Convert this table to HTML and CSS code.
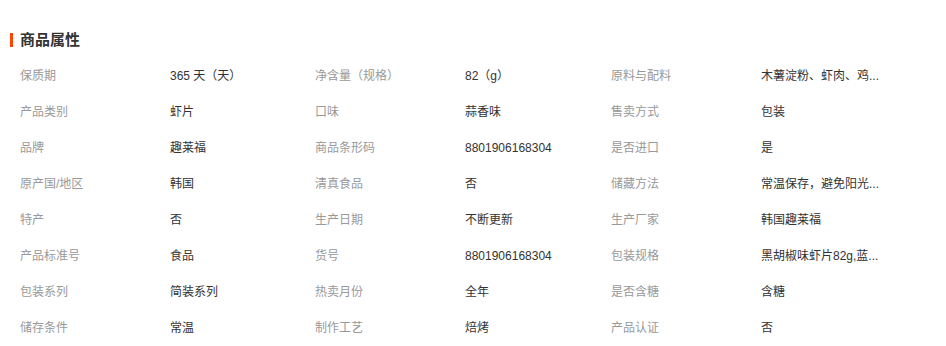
FILE: index.html
```html
<!DOCTYPE html>
<html lang="zh-CN">
<head>
<meta charset="utf-8">
<title>商品属性</title>
<link rel="stylesheet" href="styles.css">
</head>
<body>
<div class="panel">
  <div class="title"><span class="bar"></span><span class="title-text">商品属性</span></div>
  <div class="attrs">
    <div class="k">保质期</div><div class="v">365 天（天）</div>
    <div class="k">净含量（规格）</div><div class="v">82（g）</div>
    <div class="k">原料与配料</div><div class="v">木薯淀粉、虾肉、鸡...</div>

    <div class="k">产品类别</div><div class="v">虾片</div>
    <div class="k">口味</div><div class="v">蒜香味</div>
    <div class="k">售卖方式</div><div class="v">包装</div>

    <div class="k">品牌</div><div class="v">趣莱福</div>
    <div class="k">商品条形码</div><div class="v">8801906168304</div>
    <div class="k">是否进口</div><div class="v">是</div>

    <div class="k">原产国/地区</div><div class="v">韩国</div>
    <div class="k">清真食品</div><div class="v">否</div>
    <div class="k">储藏方法</div><div class="v">常温保存，避免阳光...</div>

    <div class="k">特产</div><div class="v">否</div>
    <div class="k">生产日期</div><div class="v">不断更新</div>
    <div class="k">生产厂家</div><div class="v">韩国趣莱福</div>

    <div class="k">产品标准号</div><div class="v">食品</div>
    <div class="k">货号</div><div class="v">8801906168304</div>
    <div class="k">包装规格</div><div class="v">黑胡椒味虾片82g,蓝...</div>

    <div class="k">包装系列</div><div class="v">简装系列</div>
    <div class="k">热卖月份</div><div class="v">全年</div>
    <div class="k">是否含糖</div><div class="v">含糖</div>

    <div class="k">储存条件</div><div class="v">常温</div>
    <div class="k">制作工艺</div><div class="v">焙烤</div>
    <div class="k">产品认证</div><div class="v">否</div>
  </div>
</div>
</body>
</html>
```

FILE: styles.css
```css
html, body {
  margin: 0;
  padding: 0;
  background: #fff;
}
body {
  font-family: "Liberation Sans", "Noto Sans CJK SC", sans-serif;
  font-size: 12px;
  color: #333;
}
.panel {
  padding: 30px 0 0 10px;
}
.title {
  display: flex;
  align-items: center;
  height: 20px;
  gap: 7px;
}
.bar {
  width: 3px;
  height: 14px;
  background: #ff4400;
}
.title-text {
  font-size: 15px;
  font-weight: bold;
  color: #333;
  line-height: 20px;
}
.attrs {
  margin-top: 8px;
  padding-left: 10px;
  display: grid;
  grid-template-columns: 150px 145px 150px 146px 150px 150px;
  grid-auto-rows: 36px;
  align-items: center;
}
.k {
  color: #999;
  white-space: nowrap;
  line-height: 16px;
}
.v {
  color: #333;
  line-height: 16px;
  white-space: nowrap;
}
```
